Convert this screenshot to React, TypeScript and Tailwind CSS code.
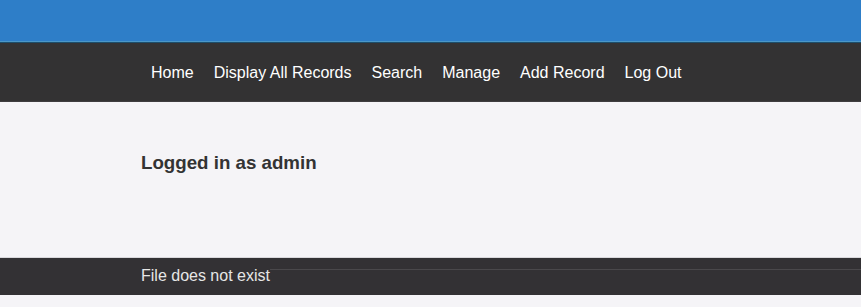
export default function App() {
  const links = ['Home', 'Display All Records', 'Search', 'Manage', 'Add Record', 'Log Out'];

  return (
    <div className="min-h-[307px] bg-[#f5f4f7] font-['Liberation_Sans',Arial,sans-serif]">
      {/* top banner */}
      <div className="h-[41px] bg-[#2e7ec8]" />
      <div className="h-px bg-[#4b97c6]" />
      <div className="h-px bg-[#1d4e6b]" />

      {/* nav */}
      <nav className="flex h-[59px] items-center border-b border-[#3f3d40] bg-[#333233] px-[141px] pt-[2px]">
        <ul className="flex">
          {links.map((link) => (
            <li key={link}>
              <a href="#" className="block px-[10px] text-base text-white">
                {link}
              </a>
            </li>
          ))}
        </ul>
      </nav>

      {/* main */}
      <main className="h-[155px] px-[141px] pt-[47px]">
        <h3 className="text-[18.72px] font-bold text-[#333333]">Logged in as admin</h3>
      </main>

      {/* footer */}
      <footer className="flex h-[38px] border-t border-[#d9d8dc] bg-[#333134]">
        <div className="flex w-full pl-[141px]">
          <p className="pt-[8px] text-base leading-[20px] text-[#e6e6e6]">File does not exist</p>
          <div className="mt-[11px] h-px flex-1 bg-[#4a484b]" />
        </div>
      </footer>
    </div>
  );
}
